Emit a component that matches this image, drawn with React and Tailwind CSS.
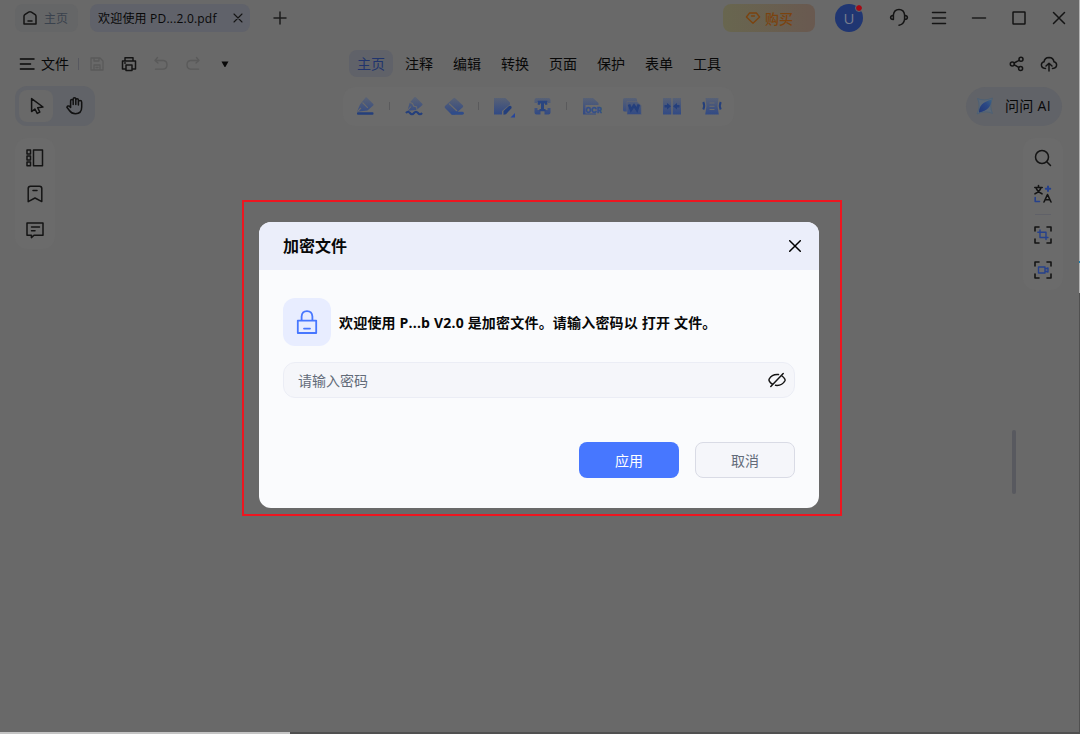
import React, { useState } from 'react';

const menuItems = ['主页', '注释', '编辑', '转换', '页面', '保护', '表单', '工具'];

const Icon = ({ size = 20, width = 1.5, className = '', children }) => (
  <svg
    width={size}
    height={size}
    viewBox={`0 0 ${size} ${size}`}
    fill="none"
    stroke="currentColor"
    strokeWidth={width}
    strokeLinecap="round"
    strokeLinejoin="round"
    className={`shrink-0 ${className}`}
  >
    {children}
  </svg>
);

// Toolbar glyphs share one vertical fade
const ToolIcon = ({ children }) => (
  <svg width="20" height="20" viewBox="0 0 20 20" fill="url(#toolFade)" className="shrink-0">
    {children}
  </svg>
);

const Divider = () => <div className="w-px h-2 bg-[#5a5a5c]" />;

const TitleBar = () => (
  <div className="flex items-center h-9 pl-[15px] shrink-0">
    <div className="flex items-center w-[63px] h-7 rounded-lg bg-[#656667] pl-[7px] gap-1.5 text-xs text-[#3a424d]">
      <Icon size={16} className="text-[#151515]">
        <path d="M2 6.2 Q2 5.2 2.8 4.6 L6.6 2.1 Q8 1.2 9.4 2.1 L13.2 4.6 Q14 5.2 14 6.2 V14 H2 Z M6 11 H10" />
      </Icon>
      <span className="pt-px">主页</span>
    </div>
    <div className="flex items-center justify-between w-40 h-7 rounded-lg bg-[#60626a] ml-3 pl-2 pr-[7px] text-xs text-[#080808]">
      <span className="whitespace-nowrap pt-px tracking-[0.2px]">欢迎使用 PD...2.0.pdf</span>
      <Icon size={10} width={1.1} className="text-[#151515]">
        <path d="M1 1 L9 9 M9 1 L1 9" />
      </Icon>
    </div>
    <Icon size={20} className="ml-5 text-[#1c1c1c]">
      <path d="M10 4 V16 M4 10 H16" />
    </Icon>
    <div className="flex items-center justify-center w-[92px] h-7 rounded-lg ml-[433px] gap-1 bg-linear-to-r from-[#68664f] to-[#695950] text-sm text-[#7b430f]">
      <Icon size={16} width={1.3}>
        <path d="M4.6 3 H11.4 L14.6 7 L8 13.2 L1.4 7 Z M6.5 6 H9.5" />
      </Icon>
      <span className="font-medium pt-px">购买</span>
    </div>
    <div className="relative flex items-center justify-center w-7 h-7 rounded-full ml-5 bg-[#203672] text-[15px] text-[#777c8c]">
      U
      <span className="absolute right-[1px] top-[1px] w-[6px] h-[6px] rounded-full bg-[#a50914] outline outline-1 outline-[#696969]" />
    </div>
    <div className="flex items-center gap-5 ml-[26px] text-[#141414]">
      <Icon size={20}>
        <path d="M4.4 11.5 V7 Q5 1.5 10 1.5 Q15 1.5 15.6 7 V11 Q15 16.4 10 17.2 M4.4 7.2 Q1.6 7.8 1.6 9.4 Q1.6 11.2 4.4 11.5 M15.6 7.2 Q18.4 7.8 18.4 9.4 Q18.4 11.2 15.6 11.5" />
      </Icon>
      <Icon size={20}>
        <path d="M3.5 4.5 H16.5 M3.5 10 H16.5 M3.5 15.5 H16.5" />
      </Icon>
      <Icon size={20} className="text-[#1c1c1c]">
        <path d="M3.5 10 H16.5" />
      </Icon>
      <Icon size={20}>
        <rect x="4" y="4" width="12" height="12" rx="0.5" />
      </Icon>
      <Icon size={20}>
        <path d="M4.5 4.5 L15.5 15.5 M15.5 4.5 L4.5 15.5" />
      </Icon>
    </div>
  </div>
);

const MenuBar = () => (
  <div className="flex items-center h-[27px] mt-[14px] shrink-0 text-sm text-[#080808]">
    <Icon size={20} className="ml-[17px] mr-1">
      <path d="M3.4 5 H17 M3.4 10 H13.5 M3.4 15 H17" />
    </Icon>
    <span className="pt-px">文件</span>
    <div className="w-px h-3 ml-[9px] bg-[#57585f]" />
    <div className="flex items-center gap-3 ml-[8px] text-[#5a5a5a]">
      <Icon size={20} width={1.3}>
        <path d="M4 4 H13 L16 7 V16 H4 Z M7 4 V7 H12 V4 M7 16 V11 H13 V16 M9 13.5 H11" />
      </Icon>
      <Icon size={20} className="text-[#141414]">
        <path d="M6.5 15 H3.5 V7 H16.5 V15 H13.5 M6 7 V3.7 H14 V7 M7 11 H13 V16.5 H7 Z M5.6 9 H6.4" />
      </Icon>
      <Icon size={20} width={1.3}>
        <path d="M6.5 3.5 L4 6.5 L7 9 M4 6.5 H12.5 Q16 7 16 10.7 Q16 15 12 15.2 H4.5" />
      </Icon>
      <Icon size={20} width={1.3}>
        <path d="M13.5 3.5 L16 6.5 L13 9 M16 6.5 H7.5 Q4 7 4 10.7 Q4 15 8 15.2 H15.5" />
      </Icon>
      <svg width="20" height="20" viewBox="0 0 20 20" fill="#080808">
        <path d="M6.5 7.5 H13.5 L10.4 13 H9.6 Z" />
      </svg>
    </div>
    <div className="flex items-center gap-1 ml-[114px]">
      {menuItems.map((item, i) => (
        <div
          key={item}
          className={`flex items-center justify-center w-11 h-[27px] rounded-lg ${i === 0 ? 'bg-[#606269] text-[#20346d]' : ''}`}
        >
          {item}
        </div>
      ))}
    </div>
    <div className="flex items-center gap-3 ml-[278px] text-[#141414]">
      <Icon size={20}>
        <circle cx="5.3" cy="10" r="2" />
        <circle cx="14" cy="5.3" r="2" />
        <circle cx="13.6" cy="14.4" r="2" />
        <path d="M7.2 9 L12.1 6.3 M7.3 10.8 L11.7 13.4" />
      </Icon>
      <Icon size={20}>
        <path d="M6.5 14.5 Q2.3 14.3 2.4 10.8 Q2.6 8.2 5 7.8 Q5.7 3.5 10 3.4 Q14.3 3.5 15 7.8 Q17.4 8.2 17.6 10.8 Q17.7 14.3 13.5 14.5 M10 17 V9.5 M7 12 L10 9.3 L13 12" />
      </Icon>
    </div>
  </div>
);

const ToolBar = () => (
  <div className="flex items-center h-10 mt-[9px] shrink-0">
    <div className="flex items-center w-20 h-10 ml-[15px] rounded-xl bg-[#616368] p-1 text-[#111111]">
      <div className="flex items-center justify-center w-[34px] h-8 rounded-lg bg-[#696969]">
        <Icon size={20} className="ml-0.5">
          <path d="M4.6 2.6 V15.6 L7.9 13 L10.2 17.4 L12.8 16.1 L10.7 11.7 L16 11 Z" />
        </Icon>
      </div>
      <Icon size={20} className="ml-3">
        <path d="M5.6 11.5 V4.8 A1.3 1.3 0 0 1 8.2 4.8 V8.5 V3 A1.3 1.3 0 0 1 10.8 3 V8.5 V4 A1.3 1.3 0 0 1 13.4 4 V9 V6.2 A1.3 1.3 0 0 1 16.7 6.2 V11 Q16.7 17.7 10.5 17.7 Q6.5 17.7 4.4 14.5 L1.9 11.2 Q2.8 9.3 4.4 10.2 L5.6 11.5" />
      </Icon>
    </div>

    <div className="flex items-center w-[391px] h-[39px] ml-[248px] rounded-xl bg-[#6b6b6b] pl-3">
      <ToolIcon>
        <path d="M5 8.5 L10.5 1.5 Q11 0.8 11.8 1.5 L18.3 8 Q19 8.7 18.2 9.4 L12.5 14.5 L2 15.8 Z" />
        <path d="M7.5 6.5 L12.8 11.8 M2.5 15.5 L6 12" stroke="#6b6b6b" strokeWidth="1.1" />
        <rect x="2" y="16.3" width="16.5" height="2.4" rx="1" fill="#243f7c" />
      </ToolIcon>
      <div className="ml-[14px]"><Divider /></div>
      <div className="flex gap-5 ml-[14px]">
        <ToolIcon>
          <path d="M5.5 7 L10.3 1.2 Q11 0.6 11.8 1.3 L18.3 7.8 Q19 8.5 18.2 9.2 L12.5 14 L3.5 14.8 Z" />
          <path d="M5.5 6.2 L8.5 7.5 L9.6 10 L12.6 11 L13 14 M3 15 L7 10.5" stroke="#6b6b6b" strokeWidth="1.1" fill="none" />
          <path d="M2 17 Q4 14.5 6 17 T10 17 T14 17 T18 17" stroke="#243f7c" strokeWidth="2.2" fill="none" />
        </ToolIcon>
        <ToolIcon>
          <path d="M1 10 L9.4 2.2 Q10.3 1.4 11.2 2.2 L19 9.6 Q19.6 10.4 18.8 11.2 L14 15.5 L11 18.5 H7.5 L1 12 Q0.2 11 1 10 Z" />
          <path d="M5 7.5 L13 15" stroke="#6b6b6b" strokeWidth="1.2" />
          <rect x="7" y="15.8" width="12.8" height="2.9" rx="1.4" fill="#2f4c8a" />
        </ToolIcon>
      </div>
      <div className="ml-[14px]"><Divider /></div>
      <div className="flex gap-[19px] ml-[15px]">
        <svg width="20" height="20" viewBox="0 0 20 20" fill="url(#toolFade)" className="shrink-0 overflow-visible">
          <path d="M0 2 H11.5 L16 6.5 V8.5 L8 15 V18.5 H0 Z" />
          <path d="M9.5 18.7 V15 L15 10 Q17.7 9.2 17.7 12 L12 18.2 Z" fill="#243f7c" />
          <path d="M21 17 V21.5 H16.5 Z" fill="#27469b" />
        </svg>
        <ToolIcon>
          <path d="M1.5 7 V4 Q1.5 2 3.5 2 H15.5 Q17.5 2 17.5 4 V7 H15 V6 H4 V7 Z M1.5 12 H4.5 V14 H7.5 V18.5 H3.5 Q1.5 18.5 1.5 16.5 Z M17.5 12 H14.5 V14 H11.5 V18.5 H15.5 Q17.5 18.5 17.5 16.5 Z" />
          <path d="M4.7 4.8 H14.3 V8.8 H12 V7.5 H11 V13 H12.5 V15.2 H6.5 V13 H8 V7.5 H7 V8.8 H4.7 Z" fill="#2a4580" />
        </ToolIcon>
      </div>
      <div className="ml-[13px]"><Divider /></div>
      <div className="flex gap-5 ml-[15px]">
        <ToolIcon>
          <path d="M1 2 H11 L16.5 7 V9 H3.5 V17.5 H14 V18.5 H1 Z" />
          <text x="3.2" y="16.8" fill="#324f8a" stroke="#324f8a" strokeWidth="0.3" fontSize="8" fontWeight="800" textLength="16.5" lengthAdjust="spacingAndGlyphs" fontFamily="Inter, sans-serif">OCR</text>
        </ToolIcon>
        <ToolIcon>
          <rect x="1" y="2" width="14" height="13.5" rx="1.5" />
          <path d="M5 5.5 H15 L19.2 9.5 V18.5 H5 Z" stroke="#64676f" strokeWidth="0.6" />
          <path d="M7 8.5 L9 14 L12 9.5 L15 14 L16.8 8.5" stroke="#243f7c" strokeWidth="2.6" fill="none" />
        </ToolIcon>
        <ToolIcon>
          <path d="M1 2 H9.3 V18.5 H1 Z M10.7 2 H19 V18.5 H10.7 Z" />
          <path d="M2.5 9 H5 V7 L9 10.2 L5 13.4 V11.4 H2.5 Z M17.5 9 H15 V7 L11 10.2 L15 13.4 V11.4 H17.5 Z" fill="#243f7c" />
        </ToolIcon>
        <ToolIcon>
          <path d="M3.5 2 H16.5 L15.5 10 L16.8 18.5 H3.2 L4.5 10 Z" />
          <path d="M7.5 7 H12.5 M7.5 10.3 H12.5 M7.5 13.5 H12.5" stroke="#6b6b6b" strokeWidth="1" />
          <path d="M1.3 6 Q3 9.5 1.3 13.5 M18.7 6 Q17 9.5 18.7 13.5" stroke="#243f7c" strokeWidth="2" fill="none" />
        </ToolIcon>
      </div>
    </div>

    <div className="flex items-center w-24 h-[39px] ml-[232px] rounded-full bg-[#616368] pl-[10px] text-sm text-[#080808]">
      <svg width="18" height="18" viewBox="0 0 18 18" className="shrink-0">
        <path d="M1.5 1.5 Q8 4.5 16.5 1 Q13 9 16.5 16.5 Q10 13 1 17 Q5 9 1.5 1.5 Z" fill="#5b6775" stroke="#4a6075" strokeWidth="0.8" />
        <path d="M3 15.5 Q2.5 6 15.5 2.5 Q15.5 13 3 15.5 Z" fill="url(#aiFade)" />
      </svg>
      <span className="ml-[11px] whitespace-nowrap tracking-[0.3px]">问问 AI</span>
    </div>
  </div>
);

const LeftPanel = () => (
  <div className="flex flex-col items-center w-10 h-[111px] pt-[10px] gap-4 rounded-xl bg-[#6b6b6b] text-[#141414]">
    <Icon size={20}>
      <path d="M8.5 2 H17.5 V17.8 H8.5 Z M2 2 H5.5 V6 H2 Z M2 8 H5.5 V12 H2 Z M2 14 H5.5 V17.8 H2 Z" />
    </Icon>
    <Icon size={20}>
      <path d="M3.2 4.5 Q3.2 2.2 5.5 2.2 H14.5 Q16.8 2.2 16.8 4.5 V17.6 L10 14 L3.2 17.6 Z M8 6.6 H12" />
    </Icon>
    <Icon size={20}>
      <path d="M2 3 H18 V15.2 H9 L6.4 17.6 V15.2 H2 Z M6.5 7 H14.5 M6.5 10.8 H10" />
    </Icon>
  </div>
);

const RightPanel = () => (
  <div className="flex flex-col items-center w-10 h-[152px] pt-[10px] rounded-xl bg-[#6b6b6b] text-[#141414]">
    <Icon size={20}>
      <circle cx="9" cy="9" r="6.5" />
      <path d="M14 14 L17.5 17.5" />
    </Icon>
    <Icon size={20} width={1.6} className="mt-4">
      <path d="M1.8 3.5 H9.2 M5.5 1.5 V3.5 M3 3.8 Q4.5 8 9 9.8 M8 3.8 Q6.5 8 2 9.8 M11 18 L14.5 10.5 L18 18 M12.2 15.8 H16.8" />
      <path d="M15 2.5 V7 M12.8 4.8 H17.2" stroke="#26418c" strokeWidth="2" />
      <path d="M2.2 13.5 V17.5 H6.5" stroke="#26418c" />
    </Icon>
    <div className="w-4 h-px mt-[10px] bg-[#606168]" />
    <Icon size={20} width={1.6} className="mt-[10px]">
      <path d="M2 6 V2 H6 M14 2 H18 V6 M18 14 V18 H14 M6 18 H2 V14" />
      <path d="M7 5 V12.5 H15 M4.8 7.2 H13 V14.5" stroke="#26418c" strokeWidth="1.4" />
    </Icon>
    <Icon size={20} width={1.6} className="mt-[15px]">
      <path d="M2 6 V2 H6 M14 2 H18 V6 M18 14 V18 H14 M6 18 H2 V14" />
      <path d="M5.5 7 H12 V13 H5.5 Z M12 9 L15 8 V12 L12 11" stroke="#26418c" strokeWidth="1.4" />
    </Icon>
  </div>
);

const PasswordDialog = () => {
  const [password, setPassword] = useState('');

  return (
    <div className="w-[560px] h-[286px] rounded-xl overflow-hidden bg-[#fafbfd] text-sm">
      <div className="flex items-center justify-between h-12 pl-6 pr-[18px] bg-[#ebeefa]">
        <h2 className="text-base font-bold text-[#080808]">加密文件</h2>
        <Icon size={12}>
          <path d="M0.7 0.7 L11.3 11.3 M11.3 0.7 L0.7 11.3" />
        </Icon>
      </div>
      <div className="px-6 pt-7">
        <div className="flex items-center gap-2">
          <div className="flex items-center justify-center w-12 h-12 rounded-xl bg-[#e8edff] text-[#4777ff]">
            <Icon size={24} width={1.8}>
              <path d="M2.8 10.6 H21.2 V23 H2.8 Z M6.6 10.2 V6.5 Q7 1.2 12 1.2 Q17 1.2 17.4 6.5 V10.2 M9 18.6 H15" />
            </Icon>
          </div>
          <p className="font-bold text-[#080808] whitespace-nowrap tracking-[0.19px] pt-0.5">欢迎使用 P...b V2.0 是加密文件。请输入密码以 打开 文件。</p>
        </div>
        <div className="flex items-center h-9 mt-4 pl-[14px] pr-2 rounded-xl border border-[#ebedf5] bg-[#f5f6fa]">
          <input
            type="text"
            value={password}
            onChange={(e) => setPassword(e.target.value)}
            placeholder="请输入密码"
            className="flex-1 pt-0.5 bg-transparent outline-none placeholder:text-[#626b79]"
          />
          <Icon size={18} width={1.5} className="text-[#151515]">
            <path d="M10.5 3.6 Q4 3 1.2 8 Q0.8 9 1.2 9.8 Q2.2 11.8 4.2 13 M7.5 14.3 Q14 15 16.8 10 Q17.3 9 16.8 8 Q15.8 6.2 14 5 M15.2 2.5 L2.8 15.4" />
          </Icon>
        </div>
        <div className="flex justify-end gap-4 mt-11">
          <button className="w-[100px] h-9 pt-0.5 rounded-lg bg-[#4777ff] text-white">应用</button>
          <button className="w-[100px] h-9 pt-0.5 rounded-lg border border-[#d9dbe5] bg-[#f5f6fa] text-[#626b79]">取消</button>
        </div>
      </div>
    </div>
  );
};

const App = () => (
  <div className="relative flex flex-col w-[1080px] h-[734px] overflow-hidden bg-[#696969] font-['Open_Sans','Noto_Sans_CJK_SC',sans-serif]">
    <svg width="0" height="0" className="absolute">
      <defs>
        <linearGradient id="toolFade" gradientUnits="userSpaceOnUse" x1="0" y1="2" x2="0" y2="18">
          <stop offset="0" stopColor="#586175" />
          <stop offset="1" stopColor="#324a84" />
        </linearGradient>
        <linearGradient id="aiFade" x1="0" y1="1" x2="1" y2="0">
          <stop offset="0" stopColor="#213878" />
          <stop offset="0.6" stopColor="#2b4885" />
          <stop offset="1" stopColor="#3e6482" />
        </linearGradient>
      </defs>
    </svg>

    <div className="flex flex-1 min-h-0">
      <div className="flex flex-col flex-1 min-w-0">
        <TitleBar />
        <MenuBar />
        <ToolBar />
        <div className="flex justify-between mt-3 pl-[15px] pr-4">
          <LeftPanel />
          <RightPanel />
        </div>
        <div className="w-1 h-16 mt-[140px] ml-[1012px] rounded-full bg-[#58595f]" />
      </div>
      {/* Window edge */}
      <div className="flex flex-col w-px">
        <div className="h-[261px] bg-[#b5b5b5]" />
        <div className="h-[2px] bg-[#1581b5]" />
        <div className="h-[30px] bg-[#b5b5b5]" />
        <div className="flex-1 bg-[#505050]" />
      </div>
    </div>
    <div className="flex h-[2px] shrink-0">
      <div className="w-[290px] bg-[#c4c4c4]" />
      <div className="flex-1 bg-[#505050]" />
    </div>

    {/* Password prompt with highlight frame */}
    <div className="absolute left-[242px] top-[200px] w-[600px] h-[316px] border-2 border-[#ed1620] pt-5 pl-[15px]">
      <PasswordDialog />
    </div>
  </div>
);

export default App;
